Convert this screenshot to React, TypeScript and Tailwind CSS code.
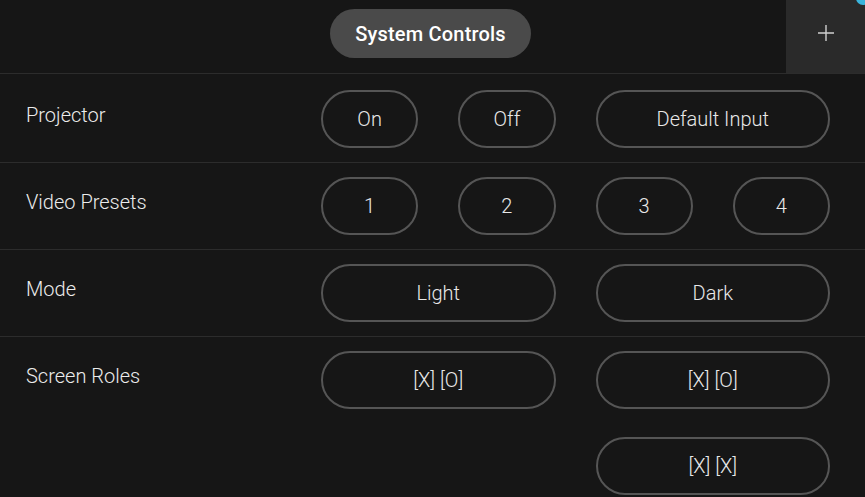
import React from "react";

const font = { fontFamily: "Roboto, 'Liberation Sans', sans-serif" };

const Pill = ({ label, wide = false }: { label: string; wide?: boolean }) => (
  <button
    className={`h-[58px] rounded-full border-2 border-[#555555] bg-transparent text-[20px] font-light text-[#e8e8e8] ${
      wide ? "col-span-2" : ""
    }`}
  >
    {label}
  </button>
);

const Row = ({
  title,
  children,
  first = false,
  last = false,
}: {
  title: string;
  children: React.ReactNode;
  first?: boolean;
  last?: boolean;
}) => (
  <div
    className={`flex items-start px-[26px] pr-[35px] ${first ? "pt-[16px]" : "pt-[14px]"} ${
      last ? "pb-[14px]" : "pb-[14px] border-b border-[#2c2c2c]"
    }`}
  >
    <div className="w-[295px] pt-[13px] text-[20px] font-light leading-6 text-[#ececec]">{title}</div>
    <div className="grid flex-1 grid-cols-4 gap-x-10 gap-y-[28px]">{children}</div>
  </div>
);

export default function App() {
  return (
    <div className="relative h-[497px] w-[865px] overflow-hidden bg-[#161616]" style={font}>
      {/* Header */}
      <div className="flex h-[74px] border-b border-[#2c2c2c]">
        <div className="flex flex-1 items-center justify-center pl-[75px] pb-[6px]">
          <div className="flex h-[49px] items-center rounded-full bg-[#4a4a4a] px-[25px] text-[20px] font-medium tracking-[0.2px] text-white">
            System Controls
          </div>
        </div>
        <div className="flex w-[79px] items-center justify-center bg-[#2a2a2a] pb-[8px]">
          <svg width="18" height="18" viewBox="0 0 18 18" stroke="#cfcfcf" strokeWidth="1.4">
            <path d="M9 1v16M1 9h16" />
          </svg>
        </div>
      </div>

      <Row title="Projector" first>
        <Pill label="On" />
        <Pill label="Off" />
        <Pill label="Default Input" wide />
      </Row>
      <Row title="Video Presets">
        <Pill label="1" />
        <Pill label="2" />
        <Pill label="3" />
        <Pill label="4" />
      </Row>
      <Row title="Mode">
        <Pill label="Light" wide />
        <Pill label="Dark" wide />
      </Row>
      <Row title="Screen Roles" last>
        <Pill label="[X] [O]" wide />
        <Pill label="[X] [O]" wide />
        <div className="col-span-2" />
        <Pill label="[X] [X]" wide />
      </Row>

      <div className="absolute -right-[5px] -top-[9px] h-[14px] w-[14px] rounded-full bg-[#3ab4dc]" />
    </div>
  );
}
